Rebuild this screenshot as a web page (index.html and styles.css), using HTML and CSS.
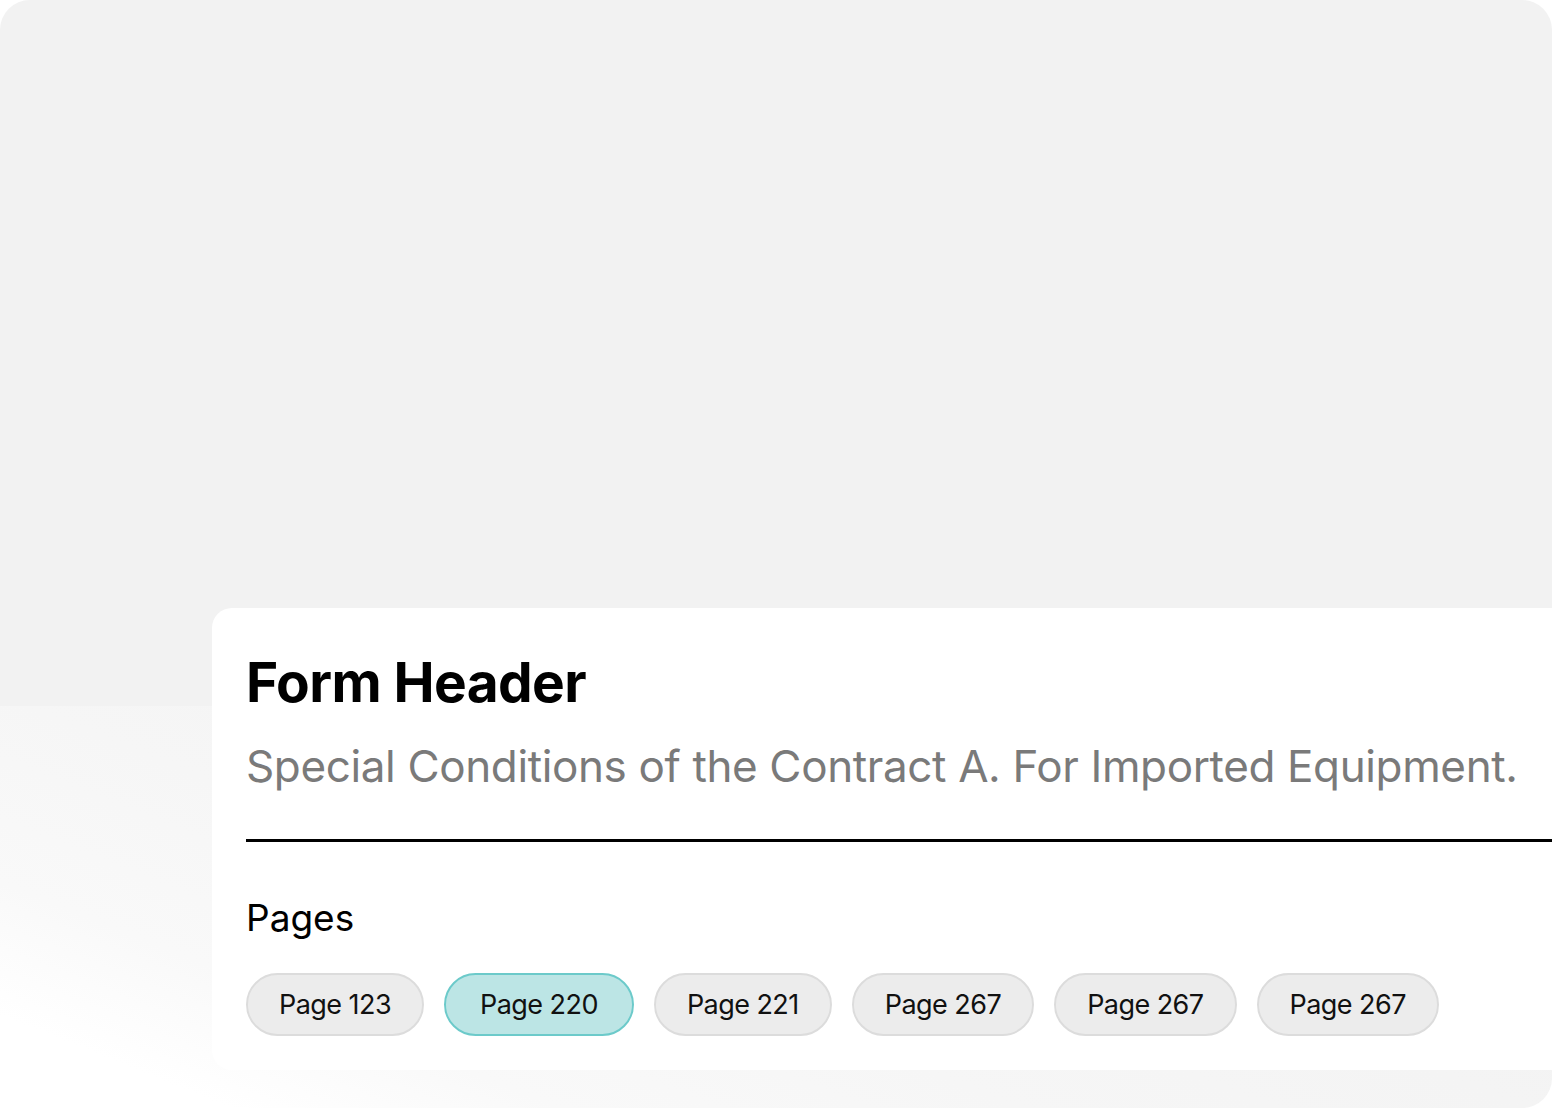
FILE: index.html
```html
<!DOCTYPE html>
<html lang="en">
<head>
<meta charset="utf-8">
<title>Form Header</title>
<link rel="stylesheet" href="styles.css">
</head>
<body>
<div class="frame">
  <section class="card">
    <h1 class="title">Form Header</h1>
    <p class="subtitle">Special Conditions of the Contract A. For Imported Equipment.</p>
    <hr class="rule">
    <h2 class="label">Pages</h2>
    <div class="chips">
      <button class="chip">Page 123</button>
      <button class="chip chip-active">Page 220</button>
      <button class="chip">Page 221</button>
      <button class="chip">Page 267</button>
      <button class="chip">Page 267</button>
      <button class="chip">Page 267</button>
    </div>
  </section>
</div>
</body>
</html>
```

FILE: styles.css
```css
* { box-sizing: border-box; }

html, body {
  margin: 0;
  padding: 0;
  background: #ffffff;
}

body {
  font-family: "Inter", "Liberation Sans", sans-serif;
  width: 1552px;
  height: 1108px;
  overflow: hidden;
}

.frame {
  width: 1552px;
  height: 1108px;
  border-radius: 30px;
  overflow: hidden;
  padding-top: 608px;
  background:
    linear-gradient(22deg, #ffffff 9%, #f9f9f9 22%, #f6f6f6 40%, #f3f3f3 70%, #f2f2f2 100%) left bottom / 100% 402px no-repeat,
    #f2f2f2;
}

.card {
  margin-left: 212px;
  margin-right: -40px;
  background: #ffffff;
  border-radius: 20px 0 0 20px;
  padding: 34px 0 34px 34px;
}

.title {
  margin: 0;
  font-size: 55px;
  line-height: 80px;
  font-weight: 700;
  letter-spacing: -0.6px;
  color: #000;
}

.subtitle {
  margin: 16px 0 0;
  font-size: 44px;
  line-height: 56px;
  font-weight: 400;
  color: #7a7a7a;
  white-space: nowrap;
  letter-spacing: -0.37px;
}

.rule {
  margin: 45px 0 0;
  border: 0;
  height: 2.5px;
  background: #000;
}

.label {
  margin: 56px 0 0;
  font-size: 37px;
  line-height: 40px;
  font-weight: 400;
  color: #000;
}

.chips {
  margin-top: 35px;
  display: flex;
  gap: 20px;
}

.chip {
  height: 63px;
  padding: 0 31px;
  border: 2px solid #dcdcdc;
  border-radius: 32px;
  background: #ececec;
  font-family: inherit;
  font-size: 27px;
  font-weight: 400;
  letter-spacing: -0.55px;
  color: #111;
  cursor: pointer;
}

.chip-active {
  background: #bce5e5;
  border-color: #6ccaca;
  padding: 0 34px;
}
```
